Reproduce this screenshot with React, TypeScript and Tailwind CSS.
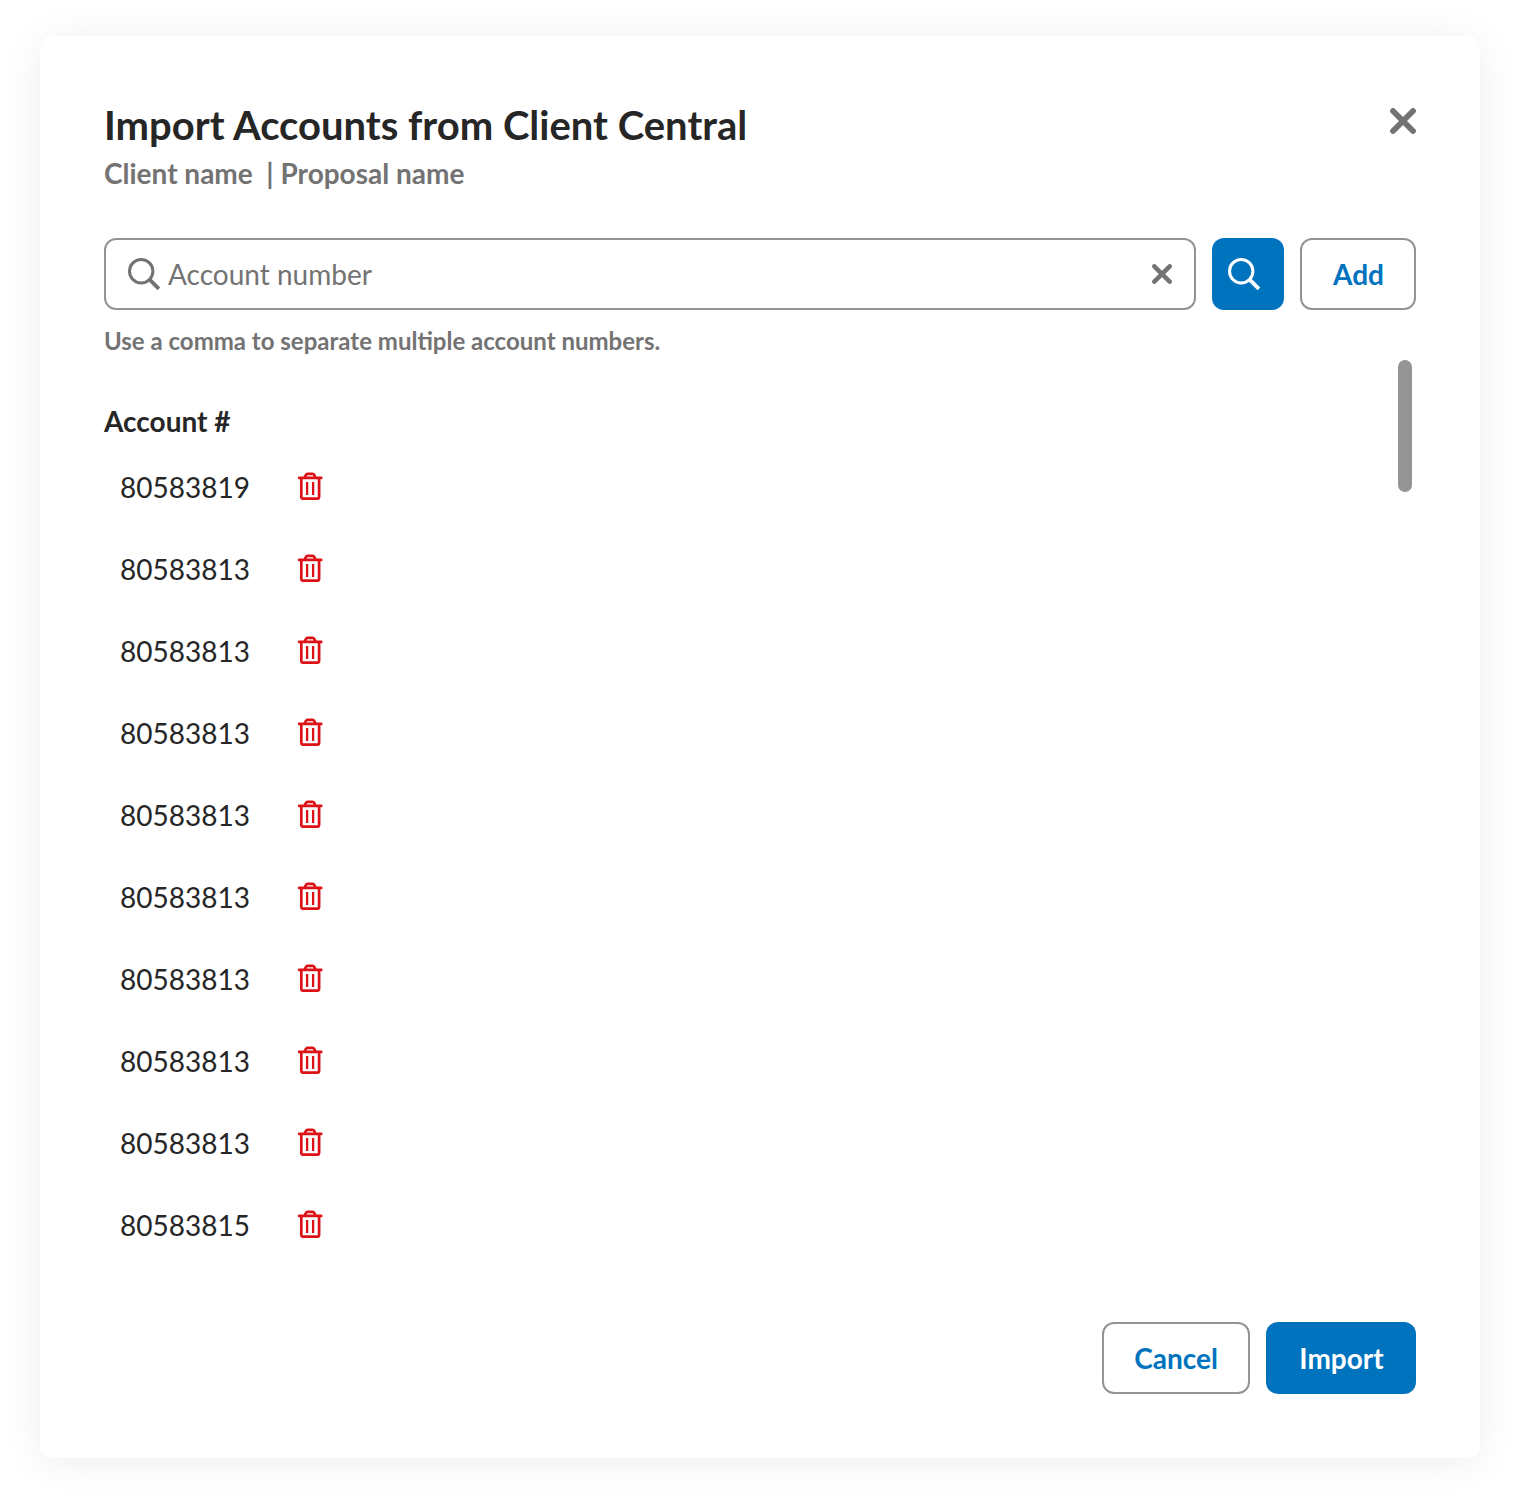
const accounts = [
  '80583819',
  '80583813',
  '80583813',
  '80583813',
  '80583813',
  '80583813',
  '80583813',
  '80583813',
  '80583813',
  '80583815',
];

function SearchIcon({ className }: { className: string }) {
  return (
    <svg viewBox="0 0 32 32" fill="none" stroke="currentColor" className={`h-8 w-8 shrink-0 ${className}`}>
      <circle cx="13.2" cy="13.2" r="11.7" strokeWidth="3" />
      <path d="M21.4 21.4L30.9 30.9" strokeWidth="3.8" />
    </svg>
  );
}

function CrossIcon({ className }: { className: string }) {
  return (
    <svg viewBox="0 0 26 26" fill="none" stroke="currentColor" strokeWidth="5.8" strokeLinecap="round" className={`shrink-0 text-[#737373] ${className}`}>
      <path d="M3 3L23 23M23 3L3 23" />
    </svg>
  );
}

function TrashIcon() {
  return (
    <svg viewBox="0 0 26 28" fill="none" stroke="currentColor" className="h-7 w-[26px] text-[#dc1217]">
      <path d="M2.1 5.9H24.3" strokeWidth="2.6" strokeLinecap="round" />
      <path d="M7.8 5.2L9 2.8Q9.5 1.9 10.5 1.9H15.7Q16.7 1.9 17.2 2.8L18.4 5.2" strokeWidth="2.7" />
      <path d="M4.3 6V25Q4.3 26.7 6 26.7H20.4Q22.1 26.7 22.1 25V6" strokeWidth="2.7" />
      <path d="M10.1 10V23M16.1 10V23" strokeWidth="2.3" />
    </svg>
  );
}

export default function App() {
  return (
    <main className="h-[1502px] w-[1520px] overflow-hidden bg-white px-10 pt-9 font-['Lato',sans-serif] text-[28px] leading-9 text-[#262626]">
      <section className="flex h-[1422px] flex-col rounded-xl bg-white px-16 pt-[65px] pb-16 shadow-[0_4px_40px_rgba(0,0,0,0.07)]">
        <header className="flex items-start justify-between">
          <div>
            <h1 className="text-[40px] leading-[48px] font-bold">Import Accounts from Client Central</h1>
            <p className="mt-1.5 font-bold whitespace-pre text-[#737373]">Client name  | Proposal name</p>
          </div>
          <button aria-label="Close" className="mt-[7px]">
            <CrossIcon className="h-[26px] w-[26px]" />
          </button>
        </header>

        <div className="mt-[47px] flex h-[72px] gap-4">
          <div className="flex flex-1 items-center rounded-xl border-2 border-[#949494] px-[22px]">
            <SearchIcon className="text-[#737373]" />
            <span className="ml-2 flex-1 text-[#737373]">Account number</span>
            <CrossIcon className="h-5 w-5" />
          </div>
          <button aria-label="Search" className="flex w-[72px] items-center rounded-xl bg-[#0073be] pl-4">
            <SearchIcon className="text-white" />
          </button>
          <button className="w-[116px] rounded-xl border-2 border-[#949494] pl-px font-bold text-[#0073be]">Add</button>
        </div>

        <div className="flex justify-between">
          <div>
            <p className="mt-[13px] text-2xl leading-9 font-bold text-[#737373]">Use a comma to separate multiple account numbers.</p>
            <h2 className="mt-11 font-bold">Account #</h2>
            <ul className="mt-[7px] pl-4">
              {accounts.map((account, index) => (
                <li key={index} className="flex h-[82px] items-center gap-[47px]">
                  <span>{account}</span>
                  <button aria-label={`Remove ${account}`} className="pb-0.5">
                    <TrashIcon />
                  </button>
                </li>
              ))}
            </ul>
          </div>
          <div className="mt-[50px] mr-1 h-[132px] w-3.5 rounded-full bg-[#949494]" />
        </div>

        <footer className="mt-auto flex h-[72px] justify-end gap-4">
          <button className="w-[148px] rounded-xl border-2 border-[#949494] font-bold text-[#0073be]">Cancel</button>
          <button className="w-[150px] rounded-xl bg-[#0073be] pl-px font-bold text-white">Import</button>
        </footer>
      </section>
    </main>
  );
}
